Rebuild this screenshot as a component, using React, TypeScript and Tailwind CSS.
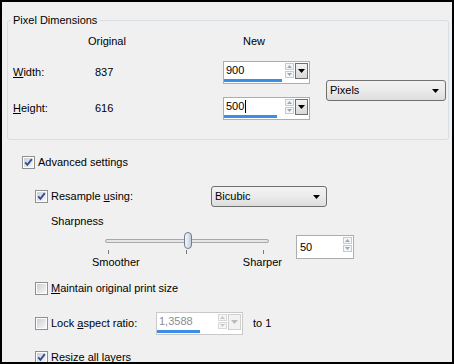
import React from "react";

const Check = ({ checked }: { checked?: boolean }) => (
  <span className="w-[13px] h-[13px] border border-[#8e8f8f] bg-white p-[1px] flex shrink-0">
    <span className="flex-1 bg-gradient-to-br from-[#cbcfd5] to-[#f7f7f7] flex items-center justify-center">
      {checked && (
        <svg width="9" height="9" viewBox="0 0 9 9">
          <path d="M1.2 4.4 L3.4 6.8 L7.8 1.2" stroke="#2f4f96" strokeWidth="1.9" fill="none" />
        </svg>
      )}
    </span>
  </span>
);

const Tri = ({ up, color = "#000", w = 7, h = 4 }: { up?: boolean; color?: string; w?: number; h?: number }) => (
  <svg width={w} height={h} viewBox={`0 0 ${w} ${h}`}>
    <path d={up ? `M0 ${h} L${w / 2} 0 L${w} ${h} Z` : `M0 0 L${w} 0 L${w / 2} ${h} Z`} fill={color} />
  </svg>
);

const Spin = ({ disabled }: { disabled?: boolean }) => (
  <div className="flex flex-col gap-[1px] w-[9px] shrink-0">
    <div className={`h-[7px] border ${disabled ? "border-[#d8d8d8]" : "border-[#c4cbd6]"} bg-[#f4f6f9] flex items-center justify-center`}>
      <Tri up color={disabled ? "#c8c8c8" : "#9aa6b8"} w={5} h={3} />
    </div>
    <div className={`h-[7px] border ${disabled ? "border-[#d8d8d8]" : "border-[#c4cbd6]"} bg-[#f4f6f9] flex items-center justify-center`}>
      <Tri color={disabled ? "#c8c8c8" : "#9aa6b8"} w={5} h={3} />
    </div>
  </div>
);

const SpinBox = ({
  value,
  bar,
  caret,
  disabled,
}: {
  value: string;
  bar: number;
  caret?: boolean;
  disabled?: boolean;
}) => (
  <div className="flex items-start">
    <div className={`flex h-[23px] border ${disabled ? "border-[#c9c9c9]" : "border-[#abadb3]"} bg-white`}>
      <div className="flex flex-col w-[60px]">
        <div className={`flex-1 flex items-center pl-[2px] ${disabled ? "text-[#8d8d8d]" : "text-black"}`}>
          {value}
          {caret && <span className="w-[1px] h-[13px] bg-black ml-[1px]" />}
        </div>
        <div className="h-[3px] bg-[#3a8ee6] mb-[1px]" style={{ width: bar }} />
      </div>
      <div className="flex items-start pt-[1px] pl-[1px] gap-[1px] pr-[1px]">
        <Spin disabled={disabled} />
        <div
          className={`w-[13px] h-[16px] border ${disabled ? "border-[#cfcfcf] bg-[#f2f2f2]" : "border-[#6f6f6f] bg-gradient-to-b from-[#f2f2f2] to-[#d9d9d9]"} flex items-center justify-center`}
        >
          <Tri color={disabled ? "#bcbcbc" : "#000"} />
        </div>
      </div>
    </div>
  </div>
);

const Combo = ({ label, w }: { label: string; w: number }) => (
  <div
    className="h-[21px] border border-[#707070] rounded-[3px] bg-gradient-to-b from-[#f2f2f2] via-[#ebebeb] to-[#dddddd] flex items-center justify-between pl-[3px] pr-[6px]"
    style={{ width: w }}
  >
    <span>{label}</span>
    <Tri />
  </div>
);

export default function App() {
  return (
    <div
      className="w-[454px] h-[364px] border-2 border-black bg-[#f0f0f0] text-[11px] text-black overflow-hidden leading-none"
      style={{ fontFamily: '"Liberation Sans", Arial, sans-serif' }}
    >
      <fieldset className="ml-[5px] mr-[3px] mt-[11px] h-[127px] border border-[#d5dfe5] rounded-[3px] p-0 m-0 min-w-0">
        <legend className="ml-[3px] px-[2px] leading-[14px]">Pixel Dimensions</legend>
        <div className="flex pl-[5px] mt-[7px] h-[14px] items-center">
          <span className="w-[75px]" />
          <span className="w-[155px]">Original</span>
          <span>New</span>
        </div>
        <div className="flex pl-[5px] mt-[13px]">
          <div className="flex flex-col">
            <div className="flex items-center h-[23px]">
              <span className="w-[75px]">
                <u>W</u>idth:
              </span>
              <span className="w-[135px] pl-[7px]">837</span>
              <SpinBox value="900" bar={58} />
            </div>
            <div className="flex items-center h-[23px] mt-[13px]">
              <span className="w-[75px]">
                <u>H</u>eight:
              </span>
              <span className="w-[135px] pl-[7px]">616</span>
              <SpinBox value="500" bar={53} caret />
            </div>
          </div>
          <div className="flex items-center ml-[16px]">
            <Combo label="Pixels" w={120} />
          </div>
        </div>
      </fieldset>

      <div className="flex items-center gap-[3px] ml-[20px] mt-[16px] h-[13px]">
        <Check checked />
        <span>Advanced settings</span>
      </div>

      <div className="ml-[33px] mt-[17px] flex items-center h-[21px]">
        <div className="flex items-center gap-[3px] w-[176px]">
          <Check checked />
          <span>
            Resample <u>u</u>sing:
          </span>
        </div>
        <Combo label="Bicubic" w={116} />
      </div>

      <div className="ml-[49px] mt-[8px] h-[12px] flex items-center">Sharpness</div>

      <div className="flex ml-[49px] mt-[3px]">
        <div className="flex flex-col w-[245px]">
          <div className="relative h-[17px] ml-[54px] w-[164px] flex items-center mt-[2px]">
            <div className="w-full h-[4px] rounded-full border border-[#a8a8a8] bg-[#e6e6e6]" />
            <div className="absolute left-[79px] top-0 w-[8px] h-[17px] rounded-[4px] border border-[#6e7c94] bg-gradient-to-r from-[#f4f6fa] via-[#dfe4ec] to-[#c5ccd8]" />
          </div>
          <div className="flex justify-between ml-[57px] w-[156px] h-[5px] mt-[1px]">
            <span className="w-[1px] h-[4px] bg-[#7a7a7a]" />
            <span className="w-[1px] h-[4px] bg-[#7a7a7a]" />
            <span className="w-[1px] h-[4px] bg-[#7a7a7a]" />
          </div>
          <div className="flex justify-between ml-[41px] w-[190px] mt-[1px] h-[12px] items-center">
            <span>Smoother</span>
            <span>Sharper</span>
          </div>
        </div>
        <div className="mt-[5px] w-[58px] h-[24px] border border-[#abadb3] bg-white flex items-start">
          <span className="flex-1 pl-[3px] h-full flex items-center">50</span>
          <div className="pt-[1px] pr-[1px]">
            <Spin />
          </div>
        </div>
      </div>

      <div className="flex items-center gap-[3px] ml-[33px] mt-[14px] h-[13px]">
        <Check />
        <span>
          <u>M</u>aintain original print size
        </span>
      </div>

      <div className="flex items-center ml-[33px] mt-[17px] h-[23px]">
        <div className="flex items-center gap-[3px] w-[121px]">
          <Check />
          <span>
            Lock <u>a</u>spect ratio:
          </span>
        </div>
        <SpinBox value="1,3588" bar={43} disabled />
        <span className="ml-[10px]">to 1</span>
      </div>

      <div className="flex items-center gap-[3px] ml-[33px] mt-[16px] h-[13px]">
        <Check checked />
        <span>
          Resize all <u>l</u>ayers
        </span>
      </div>
    </div>
  );
}
